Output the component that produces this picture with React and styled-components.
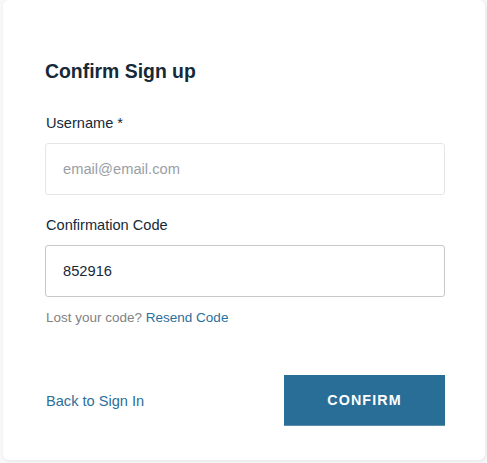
import React, { useState } from 'react';
import styled, { createGlobalStyle } from 'styled-components';

const GlobalStyle = createGlobalStyle`
    html, body {
        margin: 0;
        padding: 0;
        background: #f8f8fa;
        font-family: "Liberation Sans", Arial, sans-serif;
    }
`

const Page = styled.div`
    padding: 0 2px 3px 3px;
`

const Card = styled.form`
    box-sizing: border-box;
    width: 482px;
    height: 460px;
    padding: 60px 40px 0 42px;
    background: #fff;
    border-radius: 6px;
    box-shadow: 1px 1px 4px 0 rgba(0, 0, 0, 0.08);
`

const Title = styled.h2`
    margin: 0 0 31px;
    font-size: 19.4px;
    line-height: 22px;
    font-weight: 700;
    color: #152939;
`

const Field = styled.div`
    display: flex;
    flex-direction: column;
    margin-bottom: ${props => props.gap || 20}px;
`

const Label = styled.label`
    padding-left: 1px;
    font-size: 14.6px;
    line-height: 20px;
    color: #152939;
    margin-bottom: 10px;
`

const Input = styled.input`
    box-sizing: border-box;
    width: 400px;
    height: 52px;
    padding: 0 17px;
    font-family: inherit;
    font-size: 14.7px;
    color: #152939;
    background: #fff;
    border: 1px solid ${props => props.light ? '#e6e6e6' : '#c8c8c8'};
    border-radius: 3px;
    outline: none;
    &::placeholder {
        color: #9aa0a6;
    }
`

const Hint = styled.div`
    padding-left: 1px;
    margin-top: 2px;
    font-size: 13.5px;
    line-height: 20px;
    color: #828282;
`

const Link = styled.a`
    color: #2b6f9a;
    text-decoration: none;
    cursor: pointer;
`

const Footer = styled.div`
    display: flex;
    align-items: center;
    justify-content: space-between;
    width: 400px;
    margin-top: 47px;
`

const BackLink = styled(Link)`
    padding-left: 1px;
    font-size: 14.6px;
    line-height: 20px;
`

const Button = styled.button`
    width: 161px;
    height: 51px;
    border: none;
    border-bottom: 1px solid #5a8fb0;
    background: #296e96;
    color: #fff;
    font-family: inherit;
    font-size: 14.3px;
    font-weight: 700;
    letter-spacing: 1.1px;
    text-transform: uppercase;
    cursor: pointer;
`

export default function App() {
    const [code, setCode] = useState('852916')

    return (
        <Page>
            <GlobalStyle />
            <Card onSubmit={e => e.preventDefault()}>
                <Title>Confirm Sign up</Title>
                <Field>
                    <Label>Username *</Label>
                    <Input light placeholder="email@email.com" />
                </Field>
                <Field gap={11}>
                    <Label>Confirmation Code</Label>
                    <Input value={code} onChange={e => setCode(e.target.value)} />
                </Field>
                <Hint>
                    Lost your code? <Link>Resend Code</Link>
                </Hint>
                <Footer>
                    <BackLink>Back to Sign In</BackLink>
                    <Button type="submit">Confirm</Button>
                </Footer>
            </Card>
        </Page>
    )
}
